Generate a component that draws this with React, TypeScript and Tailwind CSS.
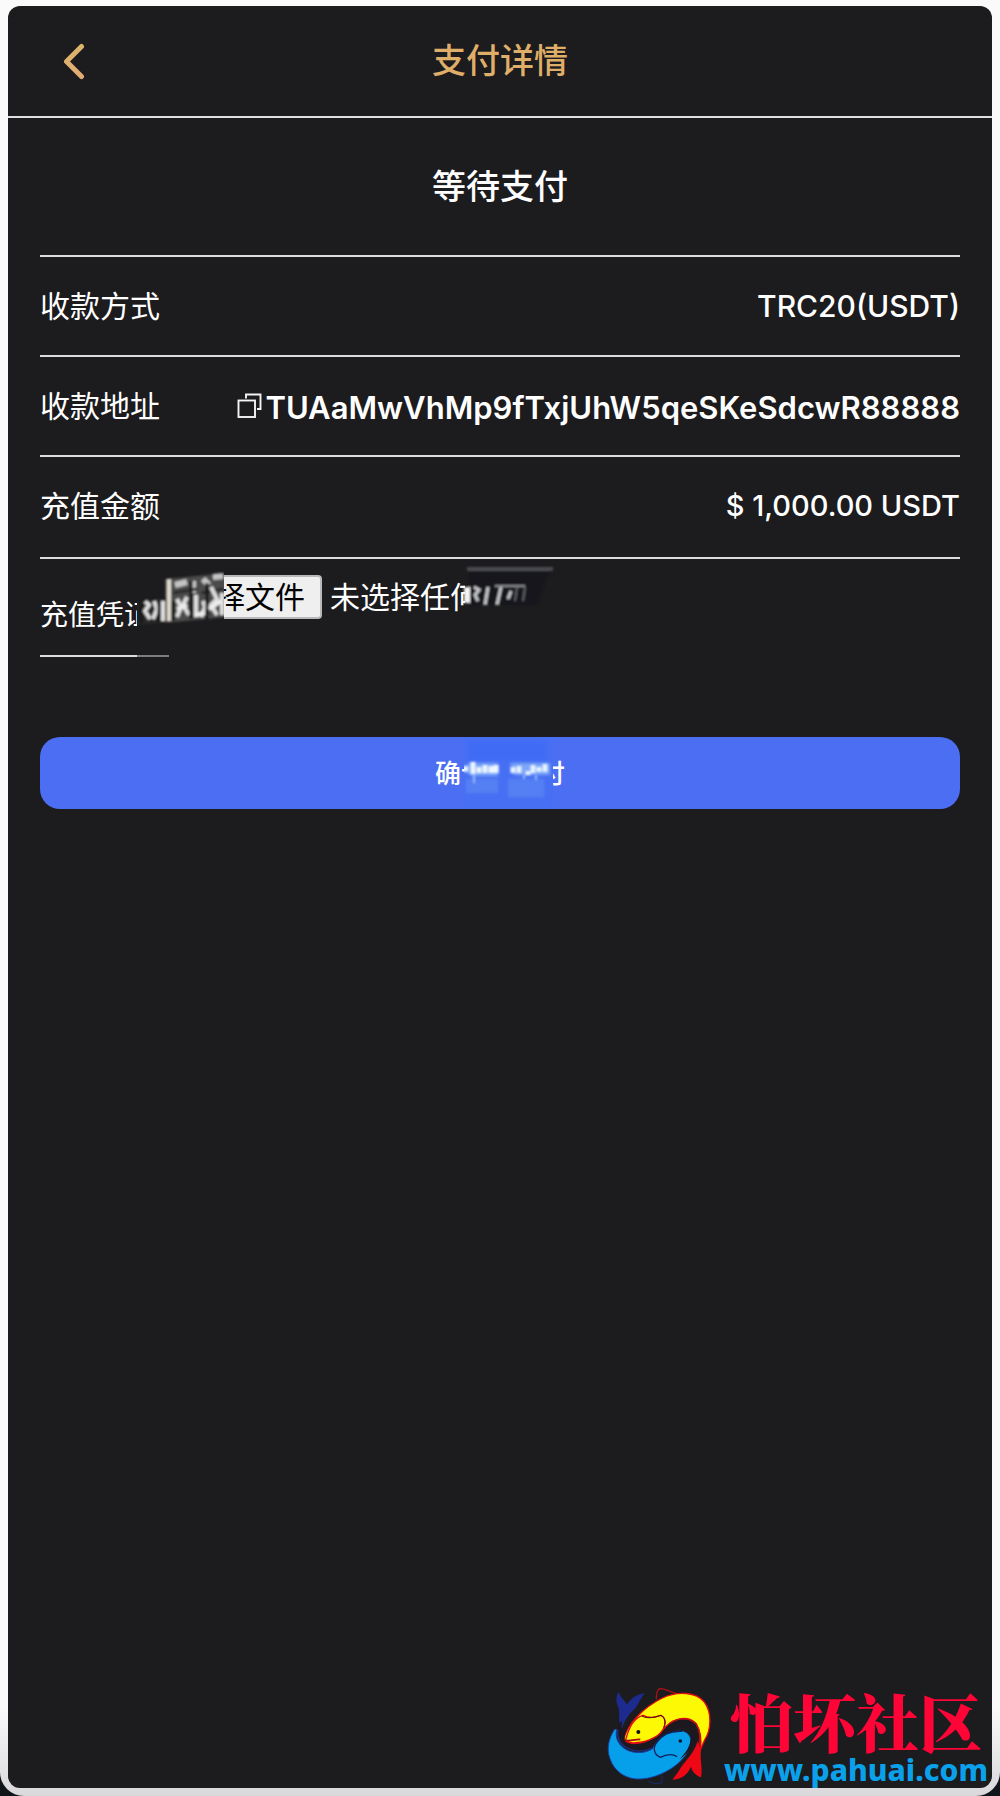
import type { ReactNode } from "react";

function BackIcon() {
  return (
    <svg width="24" height="38" viewBox="0 0 24 38" fill="none" aria-hidden="true">
      <defs>
        <linearGradient id="gold" x1="0" y1="0" x2="0" y2="1">
          <stop offset="0" stopColor="#dcb469" />
          <stop offset="1" stopColor="#e3ab74" />
        </linearGradient>
      </defs>
      <path d="M19.5 4.5 4.5 19.5 19.5 34.5" stroke="url(#gold)" strokeWidth="5" strokeLinecap="round" strokeLinejoin="round" />
    </svg>
  );
}

function CopyIcon() {
  return (
    <svg width="28" height="26" viewBox="0 0 28 26" fill="none" stroke="#f4f4f4" strokeWidth="1.9" aria-hidden="true">
      <rect x="1.5" y="7.5" width="16.5" height="16.5" />
      <path d="M9 5.5V1.5H23.5V16H20" />
    </svg>
  );
}

function FishLogo() {
  return (
    <svg width="125" height="108" viewBox="0 0 375 324" aria-hidden="true">
      <path d="M62 130C58 108 64 92 54 72C50 58 52 46 59 36C66 56 80 64 84 74C96 54 112 44 138 39C122 58 118 76 104 90C88 104 76 122 68 148Z" fill="#1d2b8f" />
      <path d="M172 58C172 42 174 28 182 26C202 26 218 38 232 41" fill="none" stroke="#b01018" strokeWidth="4" />
      <path d="M148 304C166 311 178 313 189 308V286" fill="none" stroke="#1d2b6f" strokeWidth="3" />
      <path
        d="M47 148C28 176 22 208 33 236C46 276 84 300 126 297C178 294 236 262 262 222C276 200 280 178 268 164C256 150 228 150 204 162C186 170 170 184 161 206C136 222 98 222 74 204C56 190 48 172 53 148Z"
        fill="#06a0ea"
        stroke="#1b3f9c"
        strokeWidth="3"
      />
      <path
        d="M74 178C84 132 134 82 190 54C236 32 292 36 316 66C340 98 336 150 318 178C312 190 308 200 304 210C308 182 306 154 292 132C270 106 226 112 198 142C180 164 146 188 112 190C94 192 78 186 74 178Z"
        fill="#fdf905"
        stroke="#e00a16"
        strokeWidth="4"
      />
      <path
        d="M80 180C92 130 110 112 132 106C154 118 172 110 186 106C196 110 202 124 196 140C188 164 154 186 110 188C96 190 86 186 80 180Z"
        fill="#fdf905"
        stroke="#e00a16"
        strokeWidth="4"
      />
      <path d="M128 108C152 120 174 108 186 106C198 112 202 128 194 142" fill="none" stroke="#4a1018" strokeWidth="3" />
      <path d="M78 180C90 186 102 178 124 178" fill="none" stroke="#a30d16" strokeWidth="5" />
      <circle cx="118" cy="156" r="6" fill="#101018" />
      <path
        d="M62 128C50 160 58 192 84 206C106 220 146 216 164 196C182 164 216 146 244 140C272 138 284 160 272 190C266 206 256 220 242 238C266 218 286 202 292 176C298 148 284 126 262 122C226 118 204 142 186 164C160 190 108 202 80 186C72 176 80 150 96 128C84 136 78 150 74 160C68 150 66 140 70 124Z"
        fill="#1d1820"
      />
      <path d="M56 150C52 206 112 226 160 204" fill="none" stroke="#1b2f8c" strokeWidth="4" />
      <path
        d="M176 184C190 164 218 152 250 154C274 160 280 182 266 206C258 220 248 230 238 238C222 220 210 218 184 232C170 224 158 202 176 184Z"
        fill="#06a0ea"
      />
      <path d="M250 154C218 152 190 164 174 186C158 206 168 226 184 232C204 222 218 220 234 230" fill="none" stroke="#141d58" strokeWidth="4" />
      <circle cx="244" cy="183" r="5.5" fill="#101830" />
      <path d="M212 130C238 112 272 112 292 132C304 154 306 178 298 202" fill="none" stroke="#c40c18" strokeWidth="4" />
      <path d="M296 184C286 218 262 240 246 262C238 276 228 290 220 299C242 298 264 288 276 260C280 278 292 286 306 292C312 266 302 240 306 208Z" fill="#ee0714" />
    </svg>
  );
}

/* Blurred strip over the end of the voucher label and the start of the picker */
function LabelSmudge() {
  return (
    <svg className="pointer-events-none absolute left-[97px] top-0 z-10" width="87" height="104" viewBox="0 0 87 104" aria-hidden="true">
      <defs>
        <filter id="soft" x="-20%" y="-20%" width="140%" height="140%">
          <feGaussianBlur stdDeviation="1.1" />
        </filter>
        <filter id="softer" x="-20%" y="-20%" width="140%" height="140%">
          <feGaussianBlur stdDeviation="1.6" />
        </filter>
        <clipPath id="strip">
          <rect width="87" height="104" />
        </clipPath>
      </defs>
      <rect width="87" height="104" fill="#1c1b1e" />
      <g clipPath="url(#strip)">
        <g filter="url(#soft)">
          <path d="M28 20 90 14V58L28 64Z" fill="#4c4c4c" />
          <path d="M0 44 30 38V64L0 66Z" fill="#262626" />
          <path d="M32 20V62" stroke="#dedace" strokeWidth="4" />
          <path d="M38 26 50 23M56 22V34M66 20 72 26M76 18 86 17" stroke="#c4c4c4" strokeWidth="6" />
          <path d="M36 34 60 30M64 34 86 30" stroke="#2c2c2c" strokeWidth="3" />
          <path d="M8 42 12 46 8 52 13 60M17 42 20 50 16 60M26 42V62M40 40 44 48 40 58M50 38 46 46 52 56M59 36V58M66 42 68 48 64 58M74 28 80 40 74 46 80 56M85 34V56" fill="none" stroke="#dedede" strokeWidth="4" />
          <path d="M4 44V64M22 42V64M36 42V62M54 22V60M70 24V60" stroke="#151515" strokeWidth="3" />
          <path d="M40 50 50 46M58 56 68 54M72 50 84 42" stroke="#ececec" strokeWidth="4" />
        </g>
        <path d="M0 97H32" stroke="#7e7e7e" strokeWidth="2" />
      </g>
    </svg>
  );
}

/* Blurred strip over the end of the picker's status text */
function StatusSmudge() {
  return (
    <svg className="pointer-events-none absolute left-[421px] top-0" width="108" height="92" viewBox="0 0 108 92" aria-hidden="true">
      <rect x="4" width="104" height="92" fill="#1c1b1e" />
      <g filter="url(#soft)">
        <path d="M8 12H88L76 46H8Z" fill="#15191f" />
        <path d="M6 10H92" stroke="#4a4b4f" strokeWidth="4" />
        <path d="M6 28V44" stroke="#f4f4f4" strokeWidth="6" />
        <path d="M13 28 18 31 14 36 17 42M27 28 24 46M40 28 36 46M50 32 47 40" stroke="#c8cacb" strokeWidth="3" fill="none" />
        <path d="M34 27H64" stroke="#85888b" strokeWidth="2" />
        <path d="M56 28 54 42M64 28 62 42" stroke="#5e6164" strokeWidth="2" />
      </g>
    </svg>
  );
}

/* Blurred strip over the middle of the confirm button's caption */
function ButtonSmudge() {
  return (
    <svg className="pointer-events-none absolute left-1/2 top-0 -ml-9" width="89" height="72" viewBox="0 0 89 72" aria-hidden="true">
      <rect width="89" height="72" fill="#476ff3" />
      <g filter="url(#softer)">
        <path d="M4 4H82V24H4Z" fill="#406cf5" />
        <path d="M2 42H34V56H2ZM44 42H80V60H44Z" fill="#5580f3" />
        <path d="M-4 31 6 26H34V39H8Z" fill="#7ba6f8" />
        <path d="M46 26H86V38H50Z" fill="#7ba6f8" />
      </g>
      <g filter="url(#soft)">
        <path d="M-2 32H4M9 25V37M15 30V36M21 28V36M27 29V36M32 28V36" stroke="#eef6ff" strokeWidth="5" />
        <path d="M49 30V36M55 29V36M64 34V38M69 28V36M75 30V35M81 27V35" stroke="#e6f2ff" strokeWidth="5" />
        <path d="M10 38V46M60 38V42M72 38V43" stroke="#9abcf9" strokeWidth="2" />
      </g>
    </svg>
  );
}

function DetailRow({ label, children }: { label: string; children: ReactNode }) {
  return (
    <div className="flex h-[100px] items-center justify-between border-b-2 border-[#dcdcde]">
      <dt className="pb-1 text-[30px]">{label}</dt>
      <dd className="flex items-center font-['Inter','Noto_Sans_CJK_SC',sans-serif]">{children}</dd>
    </div>
  );
}

export default function App() {
  return (
    <div className="min-h-screen bg-[#10151b] font-['Noto_Sans_CJK_SC',sans-serif] text-white">
      <div className="flex min-h-screen flex-col rounded-b-3xl bg-linear-to-b from-[#fafafb] from-95% to-[#dad8da] px-2 pt-1.5 pb-2">
        <main className="flex flex-1 flex-col rounded-xl bg-[#1c1b1e]">
          <header className="grid h-28 grid-cols-3 items-center border-b-2 border-[#dfe0e1]">
            <button type="button" aria-label="返回" className="ml-[54px] justify-self-start">
              <BackIcon />
            </button>
            <h1 className="pb-1 text-center text-[34px] leading-10 font-medium text-[#dfae68]">支付详情</h1>
          </header>

          <div className="px-8">
            <h2 className="flex h-[139px] items-center justify-center border-b-2 border-[#dcdcde] pb-1 text-[34px] font-medium">等待支付</h2>

            <dl className="pb-0.5">
              <DetailRow label="收款方式">
                <span className="text-[30px] font-medium">TRC20(USDT)</span>
              </DetailRow>
              <DetailRow label="收款地址">
                <button type="button" aria-label="复制收款地址">
                  <CopyIcon />
                </button>
                <span className="pt-1 text-[31px] font-semibold">TUAaMwVhMp9fTxjUhW5qeSKeSdcwR88888</span>
              </DetailRow>
              <div className="flex h-[102px] items-center justify-between border-b-2 border-[#dcdcde]">
                <dt className="pb-1.5 text-[30px]">充值金额</dt>
                <dd className="pb-0.5 font-['Inter',sans-serif] text-[29px] font-medium">$ 1,000.00 USDT</dd>
              </div>
            </dl>

            <div className="relative -mt-0.5 flex items-start">
              <label htmlFor="voucher" className="flex h-[98px] w-32 items-center border-b-2 border-[#dcdcde] pt-3 text-[28px] whitespace-nowrap">
                充值凭证
              </label>
              <div className="mt-4 flex items-center gap-2">
                <label htmlFor="voucher" className="flex h-11 items-center rounded-sm border-2 border-[#b9b9bb] bg-[#efeff0] px-[15px] pb-1 text-[30px] text-black">
                  选择文件
                </label>
                <input id="voucher" type="file" className="sr-only" />
                <span className="pb-1 text-[30px] leading-10">未选择任何文件</span>
              </div>
              <LabelSmudge />
              <StatusSmudge />
            </div>

            <button type="button" className="relative mt-20 flex h-[72px] w-full items-center justify-center rounded-[20px] bg-[#4c6ef2] pb-1 text-[26px] font-medium">
              确认已支付
              <ButtonSmudge />
            </button>
          </div>

          <footer className="mt-auto mr-1 flex items-end justify-end">
            <FishLogo />
            <div className="flex flex-col items-center">
              <span className="font-['Noto_Serif_CJK_SC',serif] text-[63px] leading-16 font-black text-[#ff0436]">怕坏社区</span>
              <a href="#" className="font-['Noto_Sans',sans-serif] text-[30px] leading-9 font-extrabold text-[#0ba0ea]">
                www.pahuai.com
              </a>
            </div>
          </footer>
        </main>
      </div>
    </div>
  );
}
